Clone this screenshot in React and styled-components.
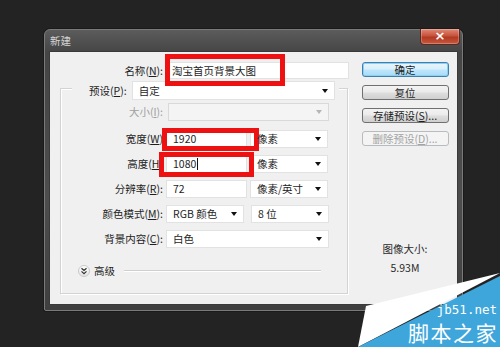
import styled, { createGlobalStyle, css } from "styled-components";

const GlobalStyle = createGlobalStyle`
  html, body {
    margin: 0;
    padding: 0;
    background: #232323;
  }
  * {
    box-sizing: border-box;
  }
`;

const FONT = `"Noto Sans CJK SC", "Noto Sans", sans-serif`;

const Key = ({ k }) => (
  <>
    (<u>{k}</u>):
  </>
);

const App = () => {
  return (
    <>
      <GlobalStyle />
      <Page>
        <Window>
          <TitleBar>
            <span>新建</span>
            <CloseButton>×</CloseButton>
          </TitleBar>
          <Client>
            <LeftPane>
              <NameRow>
                <Label $width={113}>
                  名称<Key k="N" />
                </Label>
                <Field $width={183} $height={17}>
                  <Mark $l={-2} $t={-9} $w={120} $h={32} />
                  <FieldText $pad={5}>淘宝首页背景大图</FieldText>
                </Field>
              </NameRow>

              <GroupBox>
                <PresetRow>
                  <Label>
                    预设<Key k="P" />
                  </Label>
                  <Select $width={203} $height={19}>
                    <FieldText>自定</FieldText>
                    <Arrow />
                  </Select>
                </PresetRow>

                <Rows>
                  <Row>
                    <Label $width={102} $disabled>
                      大小<Key k="I" />
                    </Label>
                    <Select $width={161} $disabled style={{ marginLeft: 2 }}>
                      <Arrow $disabled />
                    </Select>
                  </Row>

                  <Row $top={2}>
                    <Label $width={102}>
                      宽度(<u>W</u>)
                    </Label>
                    <Field $width={81}>
                      <Mark $l={-5} $t={-3} $w={97} $h={23} />
                      <FieldText>1920</FieldText>
                    </Field>
                    <Select $width={78}>
                      <FieldText>像素</FieldText>
                      <Arrow />
                    </Select>
                  </Row>

                  <Row>
                    <Label $width={102}>
                      高度(<u>H</u>)
                    </Label>
                    <Field $width={81}>
                      <Mark $l={-8} $t={-4} $w={95} $h={25} />
                      <FieldText>
                        1080
                        <Caret />
                      </FieldText>
                    </Field>
                    <Select $width={78}>
                      <FieldText>像素</FieldText>
                      <Arrow />
                    </Select>
                  </Row>

                  <Row>
                    <Label $width={102}>
                      分辨率<Key k="R" />
                    </Label>
                    <Field $width={81}>
                      <FieldText>72</FieldText>
                    </Field>
                    <Select $width={78}>
                      <FieldText>像素/英寸</FieldText>
                      <Arrow />
                    </Select>
                  </Row>

                  <Row>
                    <Label $width={102}>
                      颜色模式<Key k="M" />
                    </Label>
                    <Select $width={78}>
                      <FieldText>RGB 颜色</FieldText>
                      <Arrow />
                    </Select>
                    <Select $width={78} style={{ marginLeft: 4 }}>
                      <FieldText>8 位</FieldText>
                      <Arrow />
                    </Select>
                  </Row>

                  <Row>
                    <Label $width={102}>
                      背景内容<Key k="C" />
                    </Label>
                    <Select $width={163}>
                      <FieldText>白色</FieldText>
                      <Arrow />
                    </Select>
                  </Row>
                </Rows>

                <AdvancedRow>
                  <Chevron>
                    <svg width="8" height="8" viewBox="0 0 8 8">
                      <path
                        d="M1.5 1.2 L4 3.4 L6.5 1.2 M1.5 4.4 L4 6.6 L6.5 4.4"
                        fill="none"
                        stroke="#333"
                        strokeWidth="1.2"
                      />
                    </svg>
                  </Chevron>
                  <span>高级</span>
                  <Rule />
                </AdvancedRow>
              </GroupBox>
            </LeftPane>

            <RightPane>
              <Buttons>
                <Button $primary>确定</Button>
                <Button>复位</Button>
                <Button>
                  存储预设(<u>S</u>)...
                </Button>
                <Button $disabled>
                  删除预设(<u>D</u>)...
                </Button>
              </Buttons>
              <SizeInfo>
                <div>图像大小:</div>
                <div>5.93M</div>
              </SizeInfo>
            </RightPane>
          </Client>
        </Window>

        <Watermark>
          <svg width="145" height="77" viewBox="0 0 145 77">
            <polygon points="11,36 145,3 3,77" fill="#ffffff" />
            <polygon points="3,77 145,6 145,77" fill="#3ea6db" />
          </svg>
          <WatermarkText>
            <Site>jb51.net</Site>
            <Brand>脚本之家</Brand>
          </WatermarkText>
        </Watermark>
      </Page>
    </>
  );
};

export default App;

const Page = styled.div`
  position: relative;
  width: 500px;
  height: 347px;
  overflow: hidden;
  background: #232323;
  padding: 29px 0 0 44px;
  font-family: ${FONT};
  font-size: 10.5px;
  color: #1e1e1e;
`;

const Window = styled.div`
  width: 419px;
  height: 282px;
  display: flex;
  flex-direction: column;
  border: 1px solid #7a7a7a;
  border-radius: 6px 6px 2px 2px;
  background: linear-gradient(180deg, #5c5c5c 0%, #454545 8%, #4d4d4d 60%, #3f3f3f 100%);
  box-shadow: 0 0 0 1px #1a1a1a;
`;

const TitleBar = styled.div`
  height: 21px;
  display: flex;
  align-items: flex-start;
  justify-content: space-between;
  padding-left: 5px;
  color: #d6d6d6;

  span {
    margin-top: 5px;
    line-height: 12px;
  }
`;

const CloseButton = styled.div`
  width: 40px;
  height: 16px;
  margin-right: 2px;
  margin-top: -1px;
  border: 1px solid #5a2a22;
  border-top: none;
  border-radius: 0 0 4px 4px;
  background: linear-gradient(180deg, #e08a78 0%, #c7523b 45%, #b13a22 55%, #c9583e 100%);
  color: #fff;
  font-family: "DejaVu Sans", sans-serif;
  font-weight: bold;
  font-size: 13px;
  line-height: 14px;
  text-align: center;
  box-shadow: inset 0 0 0 1px rgba(255, 255, 255, 0.25);
`;

const Client = styled.div`
  flex: 1;
  margin: 0 4px 5px 4px;
  display: flex;
  background: #f0f0f0;
  border: 1px solid #3a3a3a;
`;

const LeftPane = styled.div`
  width: 299px;
  padding-top: 10px;
  display: flex;
  flex-direction: column;
`;

const Label = styled.div`
  flex: none;
  width: ${(p) => (p.$width ? `${p.$width}px` : "auto")};
  text-align: right;
  white-space: nowrap;
  line-height: 14px;
  color: ${(p) => (p.$disabled ? "#a0a0a0" : "#1e1e1e")};

  u {
    text-underline-offset: 1px;
  }
`;

const NameRow = styled.div`
  display: flex;
  align-items: center;
  gap: 3px;
  position: relative;
  z-index: 1;
`;

const boxBase = css`
  position: relative;
  flex: none;
  display: flex;
  align-items: center;
  width: ${(p) => p.$width}px;
  height: ${(p) => p.$height || 18}px;
  background: ${(p) => (p.$disabled ? "#f4f4f4" : "#ffffff")};
  border: 1px solid ${(p) => (p.$disabled ? "#d9d9d9" : "#e2e2e2")};
`;

const Field = styled.div`
  ${boxBase}
`;

const Select = styled.div`
  ${boxBase}
`;

const FieldText = styled.span`
  padding-left: ${(p) => p.$pad || 6}px;
  line-height: 14px;
  white-space: nowrap;
  position: relative;
  z-index: 2;
`;

const Caret = styled.span`
  display: inline-block;
  width: 1px;
  height: 12px;
  margin-left: 1px;
  vertical-align: -2px;
  background: #111;
`;

const Arrow = styled.span`
  position: absolute;
  right: 6px;
  top: 50%;
  margin-top: -2px;
  width: 0;
  height: 0;
  border-left: 3.5px solid transparent;
  border-right: 3.5px solid transparent;
  border-top: 4px solid ${(p) => (p.$disabled ? "#b5b5b5" : "#111")};
`;

const Mark = styled.span`
  position: absolute;
  left: ${(p) => p.$l}px;
  top: ${(p) => p.$t}px;
  width: ${(p) => p.$w}px;
  height: ${(p) => p.$h}px;
  border: 5px solid #ee1111;
  z-index: 1;
  pointer-events: none;
`;

const GroupBox = styled.div`
  margin: 9px 0 0 10px;
  width: 288px;
  height: 206px;
  border: 1px solid #d3d3d3;
  box-shadow: inset 1px 1px 0 #ffffff, 1px 1px 0 #ffffff;
  display: flex;
  flex-direction: column;
`;

const PresetRow = styled.div`
  align-self: flex-start;
  display: flex;
  align-items: center;
  gap: 5px;
  margin: -8px 0 0 11px;
  padding: 0 4px 0 17px;
  background: #f0f0f0;
`;

const Rows = styled.div`
  display: flex;
  flex-direction: column;
  gap: 7px;
  margin-top: 3px;
`;

const Row = styled.div`
  display: flex;
  align-items: center;
  gap: 3px;
  margin-top: ${(p) => p.$top || 0}px;
`;

const AdvancedRow = styled.div`
  display: flex;
  align-items: center;
  gap: 4px;
  margin: 16px 26px 0 17px;
  line-height: 14px;
`;

const Chevron = styled.span`
  width: 12px;
  height: 12px;
  border-radius: 50%;
  border: 1px solid #c9c9c9;
  background: linear-gradient(180deg, #ffffff, #e4e4e4);
  display: flex;
  align-items: center;
  justify-content: center;
`;

const Rule = styled.span`
  flex: 1;
  margin-left: 5px;
  height: 2px;
  border-top: 1px solid #cfcfcf;
  border-bottom: 1px solid #ffffff;
`;

const RightPane = styled.div`
  flex: 1;
  display: flex;
  flex-direction: column;
  align-items: center;
  padding: 10px 0 0 4px;
`;

const Buttons = styled.div`
  display: flex;
  flex-direction: column;
  gap: 8px;
`;

const Button = styled.div`
  width: 87px;
  height: 15px;
  border-radius: 3px;
  text-align: center;
  line-height: 13px;
  white-space: nowrap;
  border: 1px solid #707070;
  background: linear-gradient(180deg, #f3f3f3 0%, #ebebeb 45%, #dddddd 55%, #cfcfcf 100%);
  color: #1e1e1e;

  ${(p) =>
    p.$primary &&
    css`
      border-color: #3c7fb1;
      background: linear-gradient(180deg, #eaf6fd 0%, #d9f0fc 45%, #bee6fd 55%, #a7d9f5 100%);
      box-shadow: inset 0 0 0 1px #8fd0f2;
    `}

  ${(p) =>
    p.$disabled &&
    css`
      border-color: #b8bcbf;
      background: #f4f4f4;
      color: #a3a3a3;
    `}
`;

const SizeInfo = styled.div`
  margin-top: 96px;
  display: flex;
  flex-direction: column;
  align-items: center;
  gap: 5px;
  line-height: 14px;
  color: #2a2a2a;
`;

const Watermark = styled.div`
  position: absolute;
  right: 0;
  bottom: 0;
  width: 145px;
  height: 77px;

  svg {
    display: block;
  }
`;

const WatermarkText = styled.div`
  position: absolute;
  right: 3px;
  bottom: 0;
  display: flex;
  flex-direction: column;
  align-items: flex-end;
  white-space: nowrap;
  color: #ffffff;
`;

const Site = styled.div`
  font-family: "DejaVu Sans Mono", monospace;
  font-size: 12.5px;
  line-height: normal;
`;

const Brand = styled.div`
  font-family: "Noto Sans CJK SC", sans-serif;
  font-size: 21px;
  line-height: normal;
  letter-spacing: 1.5px;
  margin-right: -1px;
`;
